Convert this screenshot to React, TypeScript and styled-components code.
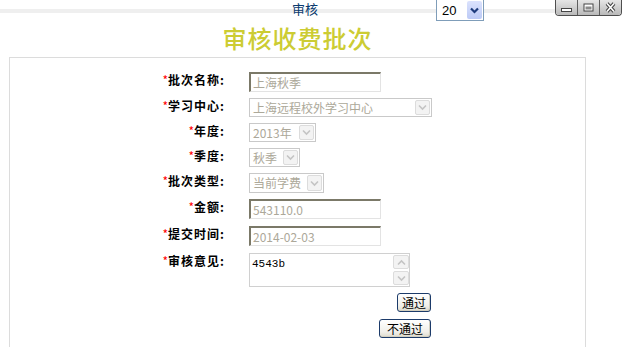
import React from "react";
import styled, { createGlobalStyle } from "styled-components";

const GlobalStyle = createGlobalStyle`
  html, body { margin: 0; padding: 0; background: #fff; }
  body {
    font-family: "Noto Sans CJK SC", "Liberation Sans", sans-serif;
    font-size: 12px;
    color: #000;
    overflow: hidden;
  }
`;

const TopBar = styled.div`
  display: flex;
  align-items: flex-start;
  height: 22px;
  background: linear-gradient(to bottom, transparent 9px, #efefef 9px, #efefef 13px, transparent 13px);
  background-size: 556px 100%;
  background-repeat: no-repeat;
`;

const TabLabel = styled.span`
  margin-left: 292px;
  font-size: 13px;
  line-height: 18px;
  color: #0b3a6e;
`;

const PageSelect = styled.div`
  margin-left: 118px;
  margin-top: -1px;
  width: 48px;
  height: 22px;
  box-sizing: border-box;
  border: 1px solid #7f9db9;
  background: #fff;
  display: flex;
`;

const PageValue = styled.span`
  flex: 1;
  padding-left: 5px;
  font-family: "Liberation Sans", sans-serif;
  font-size: 13px;
  line-height: 21px;
`;

const PageArrow = styled.span`
  width: 15px;
  margin: 1px 1px 1px 0;
  border-radius: 2px;
  background: linear-gradient(#dbe2fd, #bccaf6);
  display: flex;
  align-items: center;
  justify-content: center;
`;

const WindowControls = styled.div`
  margin-left: auto;
  margin-right: 1px;
  display: flex;
  border: 1px solid #4e4e4e;
  border-top: none;
  border-radius: 0 0 4px 4px;
  overflow: hidden;
`;

const WinButton = styled.span`
  width: 21px;
  height: 15px;
  display: flex;
  align-items: center;
  justify-content: center;
  background: linear-gradient(#e6e6e6, #b9b9b9);
  & + & { border-left: 1px solid #5e5e5e; }
`;

const Main = styled.div`
  padding: 0 37px 0 9px;
`;

const Title = styled.h1`
  margin: 0;
  text-align: center;
  font-size: 24px;
  font-weight: 500;
  color: #cccc33;
  line-height: 31px;
  padding-bottom: 4px;
  letter-spacing: 1px;
`;

const Panel = styled.div`
  height: 290px;
  box-sizing: border-box;
  border: 1px solid #dcdcdc;
  border-bottom: none;
  padding-top: 14px;
`;

const FormGrid = styled.div`
  display: grid;
  grid-template-columns: 216px 1fr;
  column-gap: 23px;
  row-gap: 6px;
`;

const Label = styled.div`
  text-align: right;
  font-weight: bold;
  font-size: 12px;
  line-height: 16px;
  letter-spacing: 1px;
  padding-right: 1px;
  white-space: nowrap;
`;

const Star = styled.span`
  color: #ff0000;
  font-weight: normal;
  letter-spacing: 0;
`;

const Cell = styled.div<{ $extra?: number }>`
  padding-bottom: ${(p) => p.$extra ?? 0}px;
`;

const Field = styled.input`
  display: block;
  width: 132px;
  height: 20px;
  box-sizing: border-box;
  border-style: solid;
  border-width: 2px 1px 1px 2px;
  border-color: #7b7968 #e3e3e3 #e3e3e3 #7b7968;
  padding: 0 2px;
  font-family: "Noto Sans CJK SC", "Liberation Sans", sans-serif;
  font-size: 12px;
  color: #aca899;
  background: #fff;
  outline: none;
`;

const SelectBox = styled.div<{ $w: number; $h: number }>`
  display: flex;
  width: ${(p) => p.$w}px;
  height: ${(p) => p.$h}px;
  box-sizing: border-box;
  border: 1px solid #c9c9c9;
  background: #fff;
`;

const SelectText = styled.span`
  flex: 1;
  padding-left: 3px;
  color: #aca899;
  line-height: 17px;
  white-space: nowrap;
  overflow: hidden;
`;

const SelectArrow = styled.span`
  width: 15px;
  margin: 1px;
  box-sizing: border-box;
  border: 1px solid #dcdcdc;
  border-radius: 2px;
  background: #f3f3f3;
  display: flex;
  align-items: center;
  justify-content: center;
`;

const AreaBox = styled.div`
  display: flex;
  width: 161px;
  height: 34px;
  box-sizing: border-box;
  border: 1px solid #d0d0d0;
  background: #fff;
`;

const AreaText = styled.div`
  flex: 1;
  padding: 3px 2px;
  font-family: "Liberation Mono", monospace;
  font-size: 11px;
  line-height: 14px;
  color: #000;
`;

const ScrollTrack = styled.div`
  width: 16px;
  padding: 1px 0;
  display: flex;
  flex-direction: column;
  justify-content: space-between;
`;

const ScrollButton = styled.span`
  height: 14px;
  box-sizing: border-box;
  border: 1px solid #dcdcdc;
  border-radius: 2px;
  background: #f3f3f3;
  display: flex;
  align-items: center;
  justify-content: center;
`;

const Actions = styled.div`
  grid-column: 2;
  width: 182px;
  display: flex;
  flex-direction: column;
  align-items: flex-end;
  gap: 7px;
`;

const Button = styled.button<{ $w: number }>`
  width: ${(p) => p.$w}px;
  height: 19px;
  padding: 0;
  box-sizing: border-box;
  border: 1px solid #1c3b6a;
  border-radius: 3px;
  background: linear-gradient(#ffffff, #f0efe9 70%, #dedbcd);
  box-shadow: inset -1px -1px 0 #d2cfbf;
  font-family: "Noto Sans CJK SC", "Liberation Sans", sans-serif;
  font-size: 12px;
  line-height: 16px;
  color: #000;
`;

const Chevron = ({ color, up = false }: { color: string; up?: boolean }) => (
  <svg width="9" height="7" viewBox="0 0 9 7">
    <polyline
      points={up ? "1,5.5 4.5,2 8,5.5" : "1,1.5 4.5,5 8,1.5"}
      fill="none"
      stroke={color}
      strokeWidth="1.6"
    />
  </svg>
);

const Row = ({ label, extra, children }: { label: string; extra?: number; children: React.ReactNode }) => (
  <>
    <Label>
      <Star>*</Star>
      {label}:
    </Label>
    <Cell $extra={extra}>{children}</Cell>
  </>
);

const Select = ({ value, w, h = 19 }: { value: string; w: number; h?: number }) => (
  <SelectBox $w={w} $h={h}>
    <SelectText>{value}</SelectText>
    <SelectArrow>
      <Chevron color="#c4c4c4" />
    </SelectArrow>
  </SelectBox>
);

export default function App() {
  return (
    <>
      <GlobalStyle />
      <TopBar>
        <TabLabel>审核</TabLabel>
        <PageSelect>
          <PageValue>20</PageValue>
          <PageArrow>
            <svg width="9" height="7" viewBox="0 0 9 7">
              <polyline points="1,1.5 4.5,5 8,1.5" fill="none" stroke="#1d3b7c" strokeWidth="2.2" />
            </svg>
          </PageArrow>
        </PageSelect>
        <WindowControls>
          <WinButton>
            <svg width="13" height="11" viewBox="0 0 13 11">
              <rect x="1.5" y="6.5" width="10" height="3" fill="#fff" stroke="#444" strokeWidth="1" />
            </svg>
          </WinButton>
          <WinButton>
            <svg width="13" height="11" viewBox="0 0 13 11">
              <rect x="1.5" y="1.5" width="10" height="8" fill="#444" />
              <rect x="2.5" y="2.5" width="8" height="6" fill="#fff" />
              <rect x="3.5" y="4.5" width="6" height="3" fill="#8a8a8a" />
            </svg>
          </WinButton>
          <WinButton>
            <svg width="13" height="11" viewBox="0 0 13 11">
              <path d="M3 1.5 L10 9.5 M10 1.5 L3 9.5" stroke="#444" strokeWidth="3.6" />
              <path d="M3 1.5 L10 9.5 M10 1.5 L3 9.5" stroke="#fff" strokeWidth="1.6" />
            </svg>
          </WinButton>
        </WindowControls>
      </TopBar>
      <Main>
        <Title>审核收费批次</Title>
        <Panel>
          <FormGrid>
            <Row label="批次名称">
              <Field defaultValue="上海秋季" readOnly />
            </Row>
            <Row label="学习中心">
              <Select value="上海远程校外学习中心" w={183} h={19} />
            </Row>
            <Row label="年度">
              <Select value="2013年" w={67} />
            </Row>
            <Row label="季度">
              <Select value="秋季" w={51} />
            </Row>
            <Row label="批次类型">
              <Select value="当前学费" w={75} h={20} />
            </Row>
            <Row label="金额" extra={1}>
              <Field defaultValue="543110.0" readOnly />
            </Row>
            <Row label="提交时间" extra={1}>
              <Field defaultValue="2014-02-03" readOnly />
            </Row>
            <Row label="审核意见">
              <AreaBox>
                <AreaText>4543b</AreaText>
                <ScrollTrack>
                  <ScrollButton>
                    <Chevron color="#c4c4c4" up />
                  </ScrollButton>
                  <ScrollButton>
                    <Chevron color="#c4c4c4" />
                  </ScrollButton>
                </ScrollTrack>
              </AreaBox>
            </Row>
            <Actions>
              <Button $w={34}>通过</Button>
              <Button $w={52}>不通过</Button>
            </Actions>
          </FormGrid>
        </Panel>
      </Main>
    </>
  );
}
